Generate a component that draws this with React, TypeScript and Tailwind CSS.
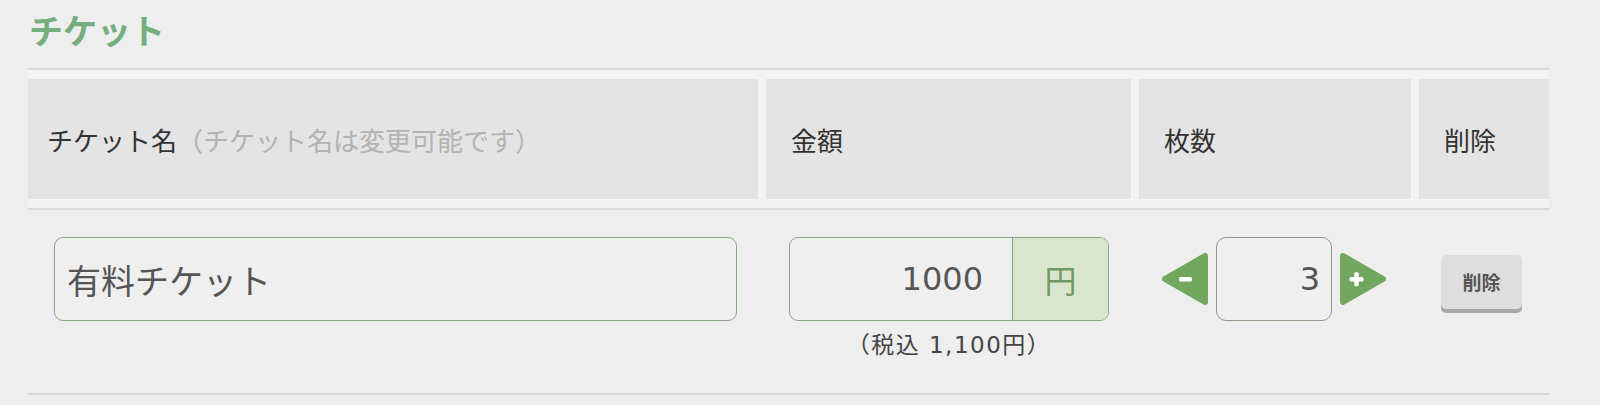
import React from "react";

const font = { fontFamily: '"Noto Sans CJK JP", "Noto Sans", sans-serif' };
// wide latin digits, closer to the original's number face
const numFont = { fontFamily: '"DejaVu Sans", "Noto Sans CJK JP", sans-serif' };

// rounded triangle stepper button
const Arrow: React.FC<{ dir: "left" | "right" }> = ({ dir }) => {
    const pts = dir === "left" ? "5,27 45,4 45,50" : "4,4 44,27 4,50";
    return (
        <svg width="49" height="54" viewBox="0 0 49 54" className="shrink-0">
            <polygon points={pts} fill="#72a85e" stroke="#72a85e" strokeWidth="6" strokeLinejoin="round" />
            {dir === "left" ? (
                <rect x="19" y="25" width="13" height="4.5" rx="1.5" fill="#ffffff" />
            ) : (
                <>
                    <rect x="10.5" y="25" width="14" height="4.5" rx="1.5" fill="#ffffff" />
                    <rect x="15.25" y="20.25" width="4.5" height="14" rx="1.5" fill="#ffffff" />
                </>
            )}
        </svg>
    );
};

export default function App() {
    return (
        <div style={font} className="w-[1600px] h-[405px] bg-[#eeeeee] pl-[28px] pt-[8px] overflow-hidden">
            <h2 className="text-[34px] font-bold leading-[44px] text-[#74ae7d] pl-[1px]">チケット</h2>

            <div className="w-[1521px] mt-[16px]">
                <div className="h-[2px] bg-[#d9d9d9]" />

                {/* header */}
                <div className="grid grid-cols-[730px_365px_272px_130px] gap-[8px] bg-[#f3f3f3] py-[9px]">
                    <div className="h-[120px] bg-[#e4e4e4] flex items-center pl-[19px] text-[26px] text-[#333333]">
                        チケット名<span className="text-[#b3b3b3]">（チケット名は変更可能です）</span>
                    </div>
                    <div className="h-[120px] bg-[#e4e4e4] flex items-center pl-[25px] text-[26px] text-[#333333]">金額</div>
                    <div className="h-[120px] bg-[#e4e4e4] flex items-center pl-[25px] text-[26px] text-[#333333]">枚数</div>
                    <div className="h-[120px] bg-[#e4e4e4] flex items-center pl-[25px] text-[26px] text-[#333333]">削除</div>
                </div>

                <div className="h-[2px] bg-[#d9d9d9]" />

                {/* row */}
                <div className="grid grid-cols-[730px_365px_272px_130px] gap-[8px] h-[183px] pt-[27px]">
                    <div className="pl-[26px] pr-[21px]">
                        <div className="h-[84px] rounded-[9px] border-[1.5px] border-[#8aa883] bg-[#efefef] flex items-center pl-[12px] text-[34px] text-[#555555]">
                            有料チケット
                        </div>
                    </div>

                    <div className="pl-[23px] pr-[22px] flex flex-col items-center">
                        <div className="w-[320px] h-[84px] rounded-[9px] border-[1.5px] border-[#8aa883] bg-[#efefef] flex overflow-hidden">
                            <div style={numFont} className="flex-1 flex items-center justify-end pr-[29px] text-[32px] text-[#555555]">1000</div>
                            <div className="w-[96px] border-l-[1.5px] border-[#8aa883] bg-[#d9e5cf] flex items-center justify-center text-[32px] text-[#6f9a63]">円</div>
                        </div>
                        <div style={numFont} className="mt-[8px] text-[23px] leading-[32px] tracking-[1.5px] text-[#444444]">（税込 1,100円）</div>
                    </div>

                    <div className="pl-[21px] flex items-start">
                        <div className="h-[84px] flex items-center gap-[7px]">
                            <Arrow dir="left" />
                            <div style={numFont} className="w-[116px] h-[84px] rounded-[10px] border-[1.5px] border-[#8c9a88] bg-[#efefef] flex items-center justify-end pr-[11px] text-[32px] text-[#555555]">3</div>
                            <Arrow dir="right" />
                        </div>
                    </div>

                    <div className="pl-[22px] pt-[18px]">
                        <div className="w-[81px] h-[54px] rounded-[5px] bg-[#dedede] shadow-[0_4px_0_#a8a8a8] flex items-center justify-center text-[19px] font-bold text-[#555555]">
                            削除
                        </div>
                    </div>
                </div>

                <div className="h-[2px] bg-[#d9d9d9]" />
            </div>
        </div>
    );
}
